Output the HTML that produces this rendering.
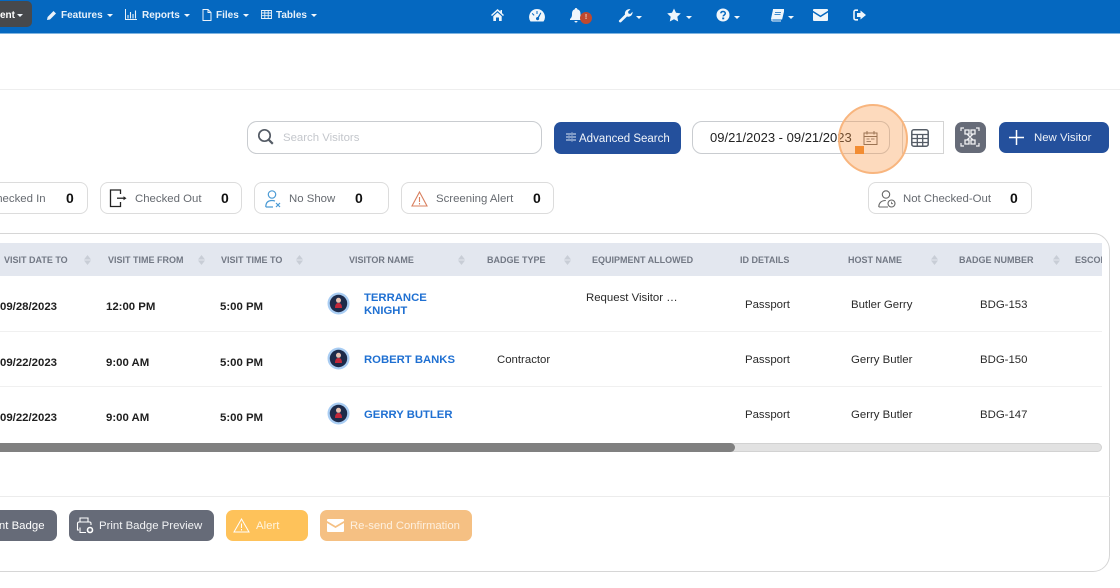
<!DOCTYPE html>
<html><head><meta charset="utf-8"><style>
html,body{margin:0;padding:0;background:#fff}
#p{position:relative;width:1120px;height:588px;overflow:hidden;background:#fff;font-family:"Liberation Sans",sans-serif}
#p div,#p svg{position:absolute}
.t{white-space:nowrap;line-height:14px}
.nav{color:#e8f1fa;font-size:10px;font-weight:bold;top:8px;line-height:15px}
.car{width:0;height:0;border-left:3px solid transparent;border-right:3px solid transparent;border-top:3px solid #f2f7fc}
.box{background:#fff;border:1px solid #dcdcdc;border-radius:8px;box-sizing:border-box}
.lab{font-size:11.4px;color:#666a70;top:192px}
.num{font-size:14px;font-weight:bold;color:#111;top:191px}
.th{font-size:9px;font-weight:bold;color:#727884;top:253px}
.s{width:7px;height:10px;top:255px}
.b{font-size:11.4px;font-weight:bold;color:#1f1f1f;margin-top:1px}
.r{font-size:11.4px;color:#2a2a2a;margin-top:1px}
.n{font-size:11.3px;font-weight:bold;color:#1f70d2;margin-top:1px}
.btn{border-radius:7px;height:31px;top:510px}
.bt{font-size:11.4px;top:519px;color:#fff}
</style></head><body><div id="p">

<!-- top nav -->
<div style="left:0;top:0;width:1120px;height:33px;background:#0568c0"></div>
<div style="left:0;top:33px;width:1120px;height:1px;background:#7fb4e0"></div>
<div style="left:-8px;top:1px;width:40px;height:26px;background:#47494c;border-radius:5px"></div>
<div class="t nav" style="left:0;color:#fff">ent</div>
<div class="car" style="left:17px;top:14px"></div>
<svg style="left:47px;top:10px" width="10" height="10" viewBox="0 0 10 10"><path d="M0 10l.6-3L6.500 1l2.500 2.500-6 6z" fill="#eaf2fa"/></svg>
<div class="t nav" style="left:61px">Features</div><div class="car" style="left:107px;top:14px"></div>
<svg style="left:125px;top:9px" width="12" height="11" viewBox="0 0 12 11"><path d="M.5 0v10.500H12" stroke="#eaf2fa" fill="none"/><path d="M3 6v3.500M5.500 3v6.500M8 5v4.500M10.500 1.500v8" stroke="#eaf2fa" stroke-width="1.100"/></svg>
<div class="t nav" style="left:142px">Reports</div><div class="car" style="left:184px;top:14px"></div>
<svg style="left:202px;top:9px" width="10" height="12" viewBox="0 0 10 12"><path d="M1 .5h5l3 3v8H1zM6 .5v3h3" stroke="#eaf2fa" fill="none"/></svg>
<div class="t nav" style="left:216px">Files</div><div class="car" style="left:243px;top:14px"></div>
<svg style="left:261px;top:10px" width="11" height="9" viewBox="0 0 11 9"><path d="M.5.5h10v8H.5zM.5 3h10M.5 5.700h10M3.800.500v8M7.200.500v8" stroke="#eaf2fa" stroke-width=".9" fill="none"/></svg>
<div class="t nav" style="left:276px">Tables</div><div class="car" style="left:311px;top:14px"></div>

<svg style="left:491px;top:9px" width="13" height="12" viewBox="0 0 13 12"><path d="M6.500 0L0 6l1 1 5.500-5 5.500 5 1-1-2-1.900V1H9.500v1.500z" fill="#f0f6fb"/><path d="M2.300 7.300L6.500 3.500l4.200 3.800V12H8V8.500H5V12H2.300z" fill="#f0f6fb"/></svg>
<svg style="left:529px;top:9px" width="16" height="13" viewBox="0 0 16 13"><path fill-rule="evenodd" d="M8 0a8 8 0 0 1 6.500 12.500h-13A8 8 0 0 1 8 0zM7.500 2v3h1V2zM3.500 4l-.7.700 2 2 .7-.7zM11.500 3.500L8.700 8A1.600 1.600 0 1 0 9.900 8.700L12.300 4z" fill="#f0f6fb"/></svg>
<svg style="left:570px;top:8px" width="13" height="15" viewBox="0 0 13 15"><path d="M6 0c1 0 1.300.7 1.300 1.300C10 2 10.500 4 10.500 6.500c0 2.500 1 3.500 2 4.500v1H0v-1c1-1 2-2 2-4.500C2 4 2.500 2 4.800 1.300 4.800.7 5 0 6 0zM4.500 13h3a1.500 1.500 0 0 1-3 0z" fill="#f0f6fb"/></svg>
<div style="left:580px;top:12px;width:12px;height:12px;border-radius:50%;background:#c0492f;color:#f5d5c8;font-size:7px;font-weight:bold;line-height:12px;text-align:center">!</div>
<svg style="left:618px;top:8px" width="15" height="15" viewBox="0 0 15 15"><path d="M1 12.500L7 6.500C6.300 3.500 9 .5 12.500 1.300L10 3.800 10.500 5.500 12.300 6 14.500 3.800C15 7 12 9.500 9 8.500L3 14.300C2 15 .3 13.500 1 12.500z" fill="#f0f6fb"/></svg>
<div class="car" style="left:636px;top:16px"></div>
<svg style="left:667px;top:8px" width="14" height="14" viewBox="0 0 14 14"><path d="M7 .5l2 4.300 4.800.6-3.500 3.300.9 4.800L7 11.200l-4.200 2.300.9-4.800L.2 5.400 5 4.800z" fill="#f0f6fb"/></svg>
<div class="car" style="left:686px;top:16px"></div>
<svg style="left:716px;top:8px" width="14" height="14" viewBox="0 0 14 14"><circle cx="7" cy="7" r="6.500" fill="#f0f6fb"/><path d="M4.800 5.300C5 3.900 6 3.500 7 3.500c1.400 0 2.300.8 2.300 1.900 0 1.600-2.100 1.500-2.100 3" stroke="#0568c0" stroke-width="1.500" fill="none"/><rect x="6.200" y="9.500" width="2" height="1.800" fill="#0568c0"/></svg>
<div class="car" style="left:734px;top:16px"></div>
<svg style="left:770px;top:9px" width="14" height="13" viewBox="0 0 14 13"><path d="M3 .5h11l-2.300 9.500H2.500c-1 0-1 2 .2 2H11" fill="none" stroke="#f0f6fb" stroke-width="1"/><path d="M3 .5h11l-2.300 9.500H1z" fill="#f0f6fb"/><path d="M5 3.500h6M4.500 5.500h6" stroke="#0568c0" stroke-width=".8"/></svg>
<div class="car" style="left:788px;top:16px"></div>
<svg style="left:813px;top:9px" width="15" height="12" viewBox="0 0 15 12"><path d="M1 0h13a1 1 0 0 1 1 1v.8L7.500 6.500 0 1.800V1a1 1 0 0 1 1-1zM0 3.500l7.500 4.700L15 3.500V11a1 1 0 0 1-1 1H1a1 1 0 0 1-1-1z" fill="#f0f6fb"/></svg>
<svg style="left:853px;top:9px" width="13" height="12" viewBox="0 0 13 12"><path d="M5 1.200H2.500A1.500 1.500 0 0 0 1 2.700v6.600a1.500 1.500 0 0 0 1.500 1.500H5" fill="none" stroke="#f0f6fb" stroke-width="1.600"/><path d="M7.500 1.500L13 6l-5.500 4.500V8H4V4h3.500z" fill="#f0f6fb"/></svg>

<div style="left:0;top:89px;width:1120px;height:1px;background:#eeeeee"></div>

<!-- search row -->
<div class="box" style="left:247px;top:121px;width:295px;height:33px;border-color:#c9ccd0;border-radius:10px"></div>
<svg style="left:257px;top:128px" width="18" height="18" viewBox="0 0 18 18"><circle cx="7.500" cy="7.500" r="5.700" fill="none" stroke="#555c66" stroke-width="1.700"/><path d="M11.800 11.800l4 4" stroke="#555c66" stroke-width="2.200"/></svg>
<div class="t" style="left:283px;top:131px;font-size:11.4px;color:#c4c7cc">Search Visitors</div>
<div style="left:554px;top:122px;width:127px;height:32px;background:#24509c;border-radius:7px"></div>
<svg style="left:566px;top:132px" width="10" height="10" viewBox="0 0 10 10"><path d="M0 2h5M7 2h3M0 5h2M4 5h6M0 8h5M7 8h3M6 .5v3M3 3.500v3M6 6.500v3" stroke="#dce6f3" stroke-width="1"/></svg>
<div class="t" style="left:579px;top:132px;font-size:11.5px;color:#f0f4fa">Advanced Search</div>

<div class="box" style="left:902px;top:121px;width:42px;height:33px;border-radius:0;border-color:#d4d4d4"></div>
<div class="box" style="left:692px;top:121px;width:198px;height:33px;border-color:#c9ccd0;border-radius:10px"></div>
<div class="t" style="left:710px;top:131px;font-size:13px;color:#222">09/21/2023 - 09/21/2023</div>
<svg style="left:863px;top:130px" width="15" height="15" viewBox="0 0 15 15"><path d="M1 3h13v11.500H1zM1 6.500h13M4 1v3.500M11 1v3.500" fill="none" stroke="#665f58" stroke-width="1"/><path d="M3.500 9h3M8 9h3.500M3.500 11.500h4.500" stroke="#777" stroke-width="1"/></svg>
<svg style="left:911px;top:129px" width="18" height="18" viewBox="0 0 18 18"><rect x=".8" y=".8" width="16.400" height="16.400" rx="2" fill="none" stroke="#555c66" stroke-width="1.500"/><path d="M.8 5.500h16.400M.8 9.500h16.400M.8 13.500h16.400M6.300 5.500v12M11.700 5.500v12" stroke="#555c66" stroke-width="1.300"/></svg>
<div style="left:955px;top:122px;width:31px;height:31px;background:#666b78;border-radius:7px"></div>
<svg style="left:960px;top:127px" width="20" height="20" viewBox="0 0 20 20"><path d="M1 4V1h3M16 1h3v3M19 16v3h-3M4 19H1v-3" fill="none" stroke="#f3f3f5" stroke-width="1.200"/><path d="M5 3h4v4H5zM11 3h4v4h-4zM5 13h4v4H5zM11 13h4v4h-4zM7 7l3 3 3-3M7 13l3-3 3 3" fill="none" stroke="#f3f3f5" stroke-width="1.300"/></svg>
<div style="left:999px;top:122px;width:110px;height:31px;background:#24509c;border-radius:7px"></div>
<svg style="left:1009px;top:130px" width="15" height="15" viewBox="0 0 15 15"><path d="M7.500 0v15M0 7.500h15" stroke="#fff" stroke-width="1.500"/></svg>
<div class="t" style="left:1034px;top:131px;font-size:11.4px;color:#eef2f9">New Visitor</div>

<!-- highlight -->
<div style="left:838px;top:104px;box-sizing:border-box;width:70px;height:70px;border-radius:50%;background:rgba(249,152,72,.36);border:2px solid #f8b57e"></div>
<div style="left:855px;top:146px;width:9px;height:8px;background:#f28c32"></div>

<!-- status chips -->
<div class="box" style="left:-20px;top:182px;width:108px;height:32px"></div>
<div class="t lab" style="left:-12px">Checked In</div><div class="t num" style="left:66px">0</div>
<div class="box" style="left:100px;top:182px;width:142px;height:32px"></div>
<svg style="left:109px;top:189px" width="18" height="19" viewBox="0 0 18 19"><path d="M11.500 5V1H1.500v16.500h10V13" fill="none" stroke="#222" stroke-width="1.300"/><path d="M8 9.200h7" stroke="#222" stroke-width="1.300"/><path d="M17.500 9.200l-3-2v4z" fill="#222"/></svg>
<div class="t lab" style="left:135px">Checked Out</div><div class="t num" style="left:221px">0</div>
<div class="box" style="left:254px;top:182px;width:135px;height:32px"></div>
<svg style="left:265px;top:190px" width="17" height="18" viewBox="0 0 17 18"><circle cx="7" cy="4.500" r="3.700" fill="none" stroke="#4a9ad4" stroke-width="1.200"/><path d="M.8 17c0-4.500 2.500-6.500 6.200-6.500 1 0 2 .2 3 .6M.8 17H8" fill="none" stroke="#4a9ad4" stroke-width="1.200"/><path d="M11 13l4 4M15 13l-4 4" stroke="#4a9ad4" stroke-width="1.200"/></svg>
<div class="t lab" style="left:289px">No Show</div><div class="t num" style="left:355px">0</div>
<div class="box" style="left:401px;top:182px;width:153px;height:32px"></div>
<svg style="left:411px;top:191px" width="17" height="16" viewBox="0 0 17 16"><path d="M8.500 1L16 15H1z" fill="none" stroke="#d9805f" stroke-width="1.100"/><path d="M8.500 6v5M8.500 12v1.500" stroke="#d9805f" stroke-width="1.100"/></svg>
<div class="t lab" style="left:436px">Screening Alert</div><div class="t num" style="left:533px">0</div>
<div class="box" style="left:868px;top:182px;width:164px;height:32px"></div>
<svg style="left:878px;top:190px" width="18" height="18" viewBox="0 0 18 18"><circle cx="8" cy="4.500" r="3.700" fill="none" stroke="#666" stroke-width="1.100"/><path d="M.8 17c0-4.500 3-6.500 7-6.500M.8 17H10" fill="none" stroke="#666" stroke-width="1.100"/><circle cx="13.500" cy="13.500" r="3.500" fill="none" stroke="#666" stroke-width="1.100"/><path d="M13.500 11.800v1.900h1.500" fill="none" stroke="#666" stroke-width=".8"/></svg>
<div class="t lab" style="left:903px">Not Checked-Out</div><div class="t num" style="left:1010px">0</div>

<!-- card -->
<div style="left:-40px;top:233px;width:1150px;height:339px;box-sizing:border-box;border:1px solid #d6d6d6;border-radius:17px"></div>
<div style="left:0;top:243px;width:1102px;height:33px;background:#e3e7ef"></div>
<div class="t th" style="left:4px">VISIT DATE TO</div>
<div class="t th" style="left:108px">VISIT TIME FROM</div>
<div class="t th" style="left:221px">VISIT TIME TO</div>
<div class="t th" style="left:349px">VISITOR NAME</div>
<div class="t th" style="left:487px">BADGE TYPE</div>
<div class="t th" style="left:592px">EQUIPMENT ALLOWED</div>
<div class="t th" style="left:740px">ID DETAILS</div>
<div class="t th" style="left:848px">HOST NAME</div>
<div class="t th" style="left:959px">BADGE NUMBER</div>
<div class="t th" style="width:27px;left:1075px;overflow:hidden">ESCORT</div>
<svg class="s" style="left:84px" viewBox="0 0 7 10"><path d="M3.500 0L7 4.500H0zM0 5.500h7L3.500 10z" fill="#c8cdd6"/></svg>
<svg class="s" style="left:198px" viewBox="0 0 7 10"><path d="M3.500 0L7 4.500H0zM0 5.500h7L3.500 10z" fill="#c8cdd6"/></svg>
<svg class="s" style="left:296px" viewBox="0 0 7 10"><path d="M3.500 0L7 4.500H0zM0 5.500h7L3.500 10z" fill="#c8cdd6"/></svg>
<svg class="s" style="left:458px" viewBox="0 0 7 10"><path d="M3.500 0L7 4.500H0zM0 5.500h7L3.500 10z" fill="#c8cdd6"/></svg>
<svg class="s" style="left:564px" viewBox="0 0 7 10"><path d="M3.500 0L7 4.500H0zM0 5.500h7L3.500 10z" fill="#c8cdd6"/></svg>
<svg class="s" style="left:931px" viewBox="0 0 7 10"><path d="M3.500 0L7 4.500H0zM0 5.500h7L3.500 10z" fill="#c8cdd6"/></svg>
<svg class="s" style="left:1053px" viewBox="0 0 7 10"><path d="M3.500 0L7 4.500H0zM0 5.500h7L3.500 10z" fill="#c8cdd6"/></svg>

<div style="left:0;top:331px;width:1102px;height:1px;background:#f0f0f0"></div>
<div style="left:0;top:386px;width:1102px;height:1px;background:#f0f0f0"></div>

<!-- row 1 -->
<div class="t b" style="left:0;top:299px">09/28/2023</div>
<div class="t b" style="left:106px;top:299px">12:00 PM</div>
<div class="t b" style="left:220px;top:299px">5:00 PM</div>
<svg style="left:327px;top:292px" width="23" height="23" viewBox="0 0 23 23"><circle cx="11.500" cy="11.500" r="11" fill="#a9cdf3"/><circle cx="11.500" cy="11.500" r="8.700" fill="#1d2b4a"/><circle cx="11.500" cy="8.300" r="2.500" fill="#e6c3b4"/><path d="M8 16c0-3.500 1.300-5 3.500-5s3.500 1.500 3.500 5z" fill="#c2283a"/></svg>
<div class="t n" style="left:364px;top:290px">TERRANCE</div>
<div class="t n" style="left:364px;top:303px">KNIGHT</div>
<div class="t r" style="left:586px;top:290px">Request Visitor …</div>
<div class="t r" style="left:745px;top:297px">Passport</div>
<div class="t r" style="left:851px;top:297px">Butler Gerry</div>
<div class="t r" style="left:980px;top:297px">BDG-153</div>
<!-- row 2 -->
<div class="t b" style="left:0;top:355px">09/22/2023</div>
<div class="t b" style="left:106px;top:355px">9:00 AM</div>
<div class="t b" style="left:220px;top:355px">5:00 PM</div>
<svg style="left:327px;top:347px" width="23" height="23" viewBox="0 0 23 23"><circle cx="11.500" cy="11.500" r="11" fill="#a9cdf3"/><circle cx="11.500" cy="11.500" r="8.700" fill="#1d2b4a"/><circle cx="11.500" cy="8.300" r="2.500" fill="#e6c3b4"/><path d="M8 16c0-3.500 1.300-5 3.500-5s3.500 1.500 3.500 5z" fill="#c2283a"/></svg>
<div class="t n" style="left:364px;top:352px">ROBERT BANKS</div>
<div class="t r" style="left:497px;top:352px">Contractor</div>
<div class="t r" style="left:745px;top:352px">Passport</div>
<div class="t r" style="left:851px;top:352px">Gerry Butler</div>
<div class="t r" style="left:980px;top:352px">BDG-150</div>
<!-- row 3 -->
<div class="t b" style="left:0;top:410px">09/22/2023</div>
<div class="t b" style="left:106px;top:410px">9:00 AM</div>
<div class="t b" style="left:220px;top:410px">5:00 PM</div>
<svg style="left:327px;top:402px" width="23" height="23" viewBox="0 0 23 23"><circle cx="11.500" cy="11.500" r="11" fill="#a9cdf3"/><circle cx="11.500" cy="11.500" r="8.700" fill="#1d2b4a"/><circle cx="11.500" cy="8.300" r="2.500" fill="#e6c3b4"/><path d="M8 16c0-3.500 1.300-5 3.500-5s3.500 1.500 3.500 5z" fill="#c2283a"/></svg>
<div class="t n" style="left:364px;top:407px">GERRY BUTLER</div>
<div class="t r" style="left:745px;top:407px">Passport</div>
<div class="t r" style="left:851px;top:407px">Gerry Butler</div>
<div class="t r" style="left:980px;top:407px">BDG-147</div>

<!-- scrollbar -->
<div style="left:-10px;top:443px;width:1112px;height:9px;background:#e2e2e2;border:1px solid #d2d2d2;box-sizing:border-box;border-radius:5px"></div>
<div style="left:-10px;top:443px;width:745px;height:9px;background:#808080;border-radius:5px"></div>

<div style="left:0;top:496px;width:1110px;height:1px;background:#ececec"></div>

<!-- bottom buttons -->
<div class="btn" style="left:-30px;width:87px;background:#666b78"></div>
<div class="t bt" style="left:-15px">Print Badge</div>
<div class="btn" style="left:69px;width:145px;background:#666b78"></div>
<svg style="left:76px;top:517px" width="18" height="17" viewBox="0 0 18 17"><path d="M4 5V1h8v4M3 13H1.500V6.500A1.500 1.500 0 0 1 3 5h10.500A1.500 1.500 0 0 1 15 6.500V8M4 10.500V15.500h6" fill="none" stroke="#fff" stroke-width="1.100"/><circle cx="14" cy="13" r="2.500" fill="none" stroke="#fff" stroke-width="1.600"/></svg>
<div class="t bt" style="left:99px;color:#f2f3f5">Print Badge Preview</div>
<div class="btn" style="left:226px;width:82px;background:#fec25a"></div>
<svg style="left:233px;top:518px" width="17" height="15" viewBox="0 0 17 15"><path d="M8.500 1L16 14H1z" fill="none" stroke="#fff" stroke-width="1"/><path d="M8.500 5.500v4.500M8.500 11v1.500" stroke="#fff" stroke-width="1"/></svg>
<div class="t bt" style="left:256px;color:#fff4df">Alert</div>
<div class="btn" style="left:320px;width:152px;background:#f5c083"></div>
<svg style="left:327px;top:519px" width="17" height="13" viewBox="0 0 17 13"><path d="M1 0h15a1 1 0 0 1 1 1v1L8.500 7 0 2V1a1 1 0 0 1 1-1zM0 4l8.500 5L17 4v8a1 1 0 0 1-1 1H1a1 1 0 0 1-1-1z" fill="#fff"/></svg>
<div class="t bt" style="left:350px;font-size:11.300px;color:#fdf0e0">Re-send Confirmation</div>

</div></body></html>
